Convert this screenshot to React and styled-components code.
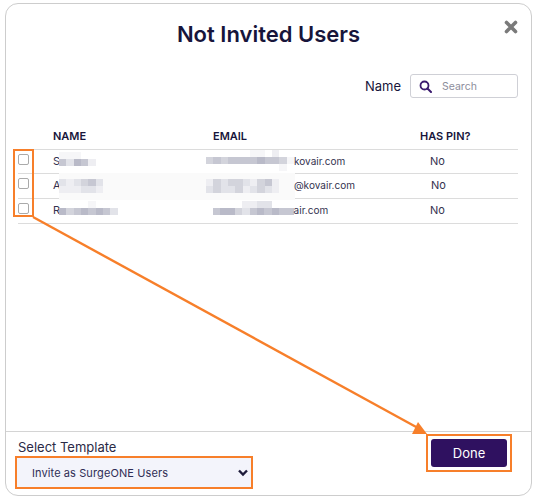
import React from "react";
import styled, { createGlobalStyle } from "styled-components";

const ORANGE = "#f77f2a";
const INK = "#17153b";

const GlobalStyle = createGlobalStyle`
  html, body {
    margin: 0;
    padding: 0;
    background: #fff;
    font-family: Inter, "Liberation Sans", sans-serif;
  }
`;

const Page = styled.div`
  position: relative;
  width: 540px;
  height: 504px;
  overflow: hidden;
  padding: 3px 0 0 5px;
  box-sizing: border-box;
`;

const Modal = styled.div`
  width: 527px;
  height: 493px;
  box-sizing: border-box;
  border: 1px solid #cdcdcd;
  border-radius: 13px;
  display: flex;
  flex-direction: column;
`;

const Header = styled.div`
  height: 68px;
  display: flex;
  align-items: flex-start;
  justify-content: center;
  position: relative;
`;

const Title = styled.h1`
  margin: 15px 0 0;
  font-size: 22px;
  line-height: 30px;
  font-weight: 600;
  color: ${INK};
`;

const Close = styled.svg`
  position: absolute;
  right: 13px;
  top: 16px;
  width: 14px;
  height: 14px;
`;

const Filter = styled.div`
  display: flex;
  justify-content: flex-end;
  align-items: center;
  gap: 9px;
  padding-right: 13px;
  height: 24px;
  margin-top: 2px;
`;

const FilterLabel = styled.span`
  font-size: 13px;
  margin-bottom: 1px;
  color: ${INK};
`;

const SearchBox = styled.div`
  width: 108px;
  height: 24px;
  box-sizing: border-box;
  border: 1px solid #cfd0d6;
  border-radius: 3px;
  display: flex;
  align-items: center;
  gap: 10px;
  padding-left: 8px;
`;

const SearchText = styled.span`
  font-size: 10.5px;
  color: #8d8e9c;
`;

const Table = styled.div`
  margin: 27px 13px 0 12px;
  flex: 1;
  position: relative;
`;

const HeadRow = styled.div`
  height: 25px;
  display: flex;
  align-items: flex-start;
  border-bottom: 1px solid #dcdcdc;
  box-sizing: border-box;
`;

const HeadCell = styled.div`
  width: ${(p) => p.$w}px;
  flex: none;
  font-size: 11px;
  line-height: 22px;
  font-weight: 600;
  color: ${INK};
`;

const Row = styled.div`
  height: ${(p) => p.$h}px;
  box-sizing: border-box;
  padding-bottom: 2px;
  display: flex;
  align-items: center;
  border-bottom: 1px solid #dcdcdc;
  font-size: 11px;
  color: #34324f;
`;

const Check = styled.input.attrs({ type: "checkbox" })`
  appearance: none;
  flex: none;
  width: 11px;
  height: 11px;
  margin: 0 24px 3px 0;
  border: 1px solid #aaa;
  border-radius: 2px;
  background: #fff;
`;

const Cell = styled.div`
  flex: none;
  width: ${(p) => p.$w}px;
  padding-left: ${(p) => p.$pad || 0}px;
  box-sizing: border-box;
  display: flex;
  align-items: center;
  position: relative;
  z-index: 1;
`;

const Initial = styled.span`
  width: 6px;
  flex: none;
`;

const Domain = styled.span`
  font-size: 10px;
  letter-spacing: 0.02px;
`;

const Mosaic = styled.div`
  display: flex;
  flex-direction: column;
  flex: none;
  margin-top: ${(p) => (p.$shift > 0 ? p.$shift * 2 : 0)}px;
  margin-bottom: ${(p) => (p.$shift < 0 ? -p.$shift * 2 : 0)}px;
`;

const MosaicRow = styled.div`
  display: flex;
  height: 7px;
`;

const Tile = styled.div`
  width: 7.33px;
  height: 7px;
  background: ${(p) => p.$c};
`;

const Patch = styled.div`
  position: absolute;
  left: 41px;
  top: 48px;
  width: 236px;
  height: 27px;
  background: #fafafa;
`;

const Footer = styled.div`
  height: 64px;
  box-sizing: border-box;
  border-top: 1px solid #d4d4d4;
  display: flex;
  justify-content: space-between;
  padding: 2px 19px 0 9px;
`;

const TemplateField = styled.div`
  display: flex;
  flex-direction: column;
`;

const FieldLabel = styled.label`
  font-size: 13px;
  line-height: 18px;
  margin: 4px 0 0 3px;
  color: #2b2a46;
`;

const Highlight = styled.div`
  border: 2.5px solid ${ORANGE};
  box-sizing: border-box;
`;

const Select = styled.div`
  width: 234px;
  height: 29px;
  background: #f3f4fb;
  display: flex;
  align-items: center;
  justify-content: space-between;
  padding: 0 2px 0 15px;
  box-sizing: border-box;
  font-size: 11px;
  letter-spacing: 0.1px;
  color: #2f2d55;
`;

const DoneWrap = styled(Highlight)`
  padding: 3px;
  width: 86px;
  height: 38px;
`;

const DoneButton = styled.button`
  width: 100%;
  height: 100%;
  border: 0;
  border-radius: 3px;
  background: #2f1160;
  color: #fff;
  font-family: inherit;
  font-size: 13px;
`;

const CheckHighlight = styled(Highlight)`
  position: absolute;
  left: 13px;
  top: 149px;
  width: 21px;
  height: 68px;
`;

const Arrow = styled.svg`
  position: absolute;
  left: 0;
  top: 0;
  width: 540px;
  height: 504px;
  pointer-events: none;
`;

const SHADES = {
  ".": "transparent",
  a: "#f6f6f8",
  b: "#eeeef2",
  c: "#e2e3e9",
  d: "#d3d4dc",
  e: "#c6c7d2",
  f: "#b9bac8",
};

const MosaicBlock = ({ rows, shift }) => (
  <Mosaic $shift={shift}>
    {rows.map((row, i) => (
      <MosaicRow key={i}>
        {row.split("").map((s, j) => (
          <Tile key={j} $c={SHADES[s]} />
        ))}
      </MosaicRow>
    ))}
  </Mosaic>
);

const users = [
  {
    initial: "S",
    name: ["aaa..", "ecfeb"],
    nameShift: -2,
    emailPad: 0,
    email: ["......aa.b..", "dedeeeefeeda", "..........a."],
    emailShift: 0,
    domain: "kovair.com",
    pin: 0,
    height: 24,
  },
  {
    initial: "A",
    name: ["cbcdec.", "bbbccb."],
    nameShift: 1,
    emailPad: -1,
    email: ["bdcddcbdeb..", "cdccdbcdcb.."],
    emailShift: 1,
    domain: "@kovair.com",
    pin: 1,
    height: 25,
  },
  {
    initial: "R",
    name: ["....a...", "fdefefec"],
    nameShift: -2,
    emailPad: 7,
    email: ["....bbcc...", "effdcefefee"],
    emailShift: -2,
    domain: "air.com",
    pin: 0,
    height: 25,
  },
];

const App = () => (
  <>
    <GlobalStyle />
    <Page>
      <Modal>
        <Header>
          <Title>Not Invited Users</Title>
          <Close viewBox="0 0 14 14">
            <path
              d="M2.5 2.5 L11.5 11.5 M11.5 2.5 L2.5 11.5"
              stroke="#7a7a7a"
              strokeWidth="3.6"
              strokeLinecap="round"
            />
          </Close>
        </Header>
        <Filter>
          <FilterLabel>Name</FilterLabel>
          <SearchBox>
            <svg width="13" height="13" viewBox="0 0 13 13">
              <circle cx="5.5" cy="5.5" r="4" fill="none" stroke="#3a1a6e" strokeWidth="1.8" />
              <path d="M8.5 8.5 L12 12" stroke="#3a1a6e" strokeWidth="2" strokeLinecap="round" />
            </svg>
            <SearchText>Search</SearchText>
          </SearchBox>
        </Filter>
        <Table>
          <HeadRow>
            <HeadCell $w={35} />
            <HeadCell $w={160}>NAME</HeadCell>
            <HeadCell $w={207}>EMAIL</HeadCell>
            <HeadCell $w={70}>HAS PIN?</HeadCell>
          </HeadRow>
          <Patch />
          {users.map((u) => (
            <Row key={u.initial} $h={u.height}>
              <Check />
              <Cell $w={153}>
                <Initial>{u.initial}</Initial>
                <MosaicBlock rows={u.name} shift={u.nameShift} />
              </Cell>
              <Cell $w={224} $pad={u.emailPad}>
                <MosaicBlock rows={u.email} shift={u.emailShift} />
                <Domain>{u.domain}</Domain>
              </Cell>
              <Cell $w={60} $pad={u.pin}>No</Cell>
            </Row>
          ))}
        </Table>
        <Footer>
          <TemplateField>
            <FieldLabel>Select Template</FieldLabel>
            <Highlight>
              <Select>
                Invite as SurgeONE Users
                <svg width="12" height="8" viewBox="0 0 12 8">
                  <path d="M2 1.5 L6 5.5 L10 1.5" fill="none" stroke="#1d1b3a" strokeWidth="2.4" />
                </svg>
              </Select>
            </Highlight>
          </TemplateField>
          <DoneWrap>
            <DoneButton>Done</DoneButton>
          </DoneWrap>
        </Footer>
      </Modal>
      <CheckHighlight />
      <Arrow viewBox="0 0 540 504">
        <path d="M33 217 L418 428" stroke={ORANGE} strokeWidth="2.4" />
        <path d="M427 434 L412 434 L418 422 Z" fill={ORANGE} />
      </Arrow>
    </Page>
  </>
);

export default App;
